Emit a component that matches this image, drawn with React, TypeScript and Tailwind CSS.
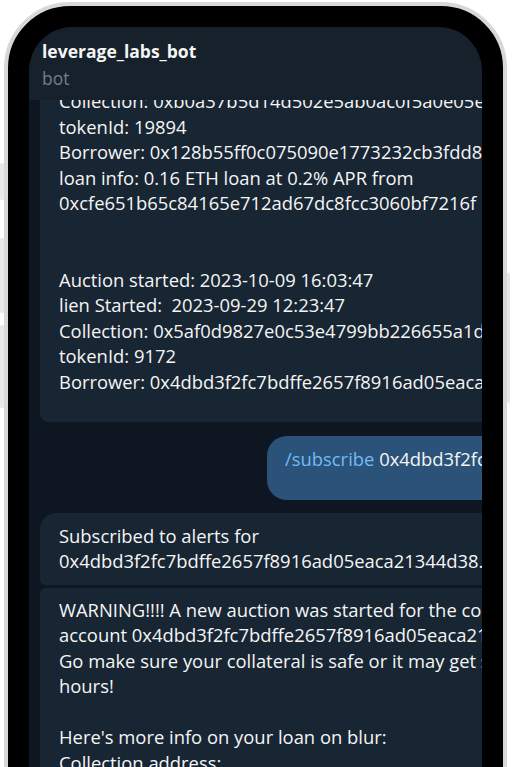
const font = { fontFamily: '"Open Sans", "Noto Sans", sans-serif' };

const firstBubble = [
  "Collection: 0xb0a37b5d14d502e5ab0ac0f5a0e05e8c",
  "tokenId: 19894",
  "Borrower: 0x128b55ff0c075090e1773232cb3fdd8e",
  "loan info: 0.16 ETH loan at 0.2% APR from",
  "0xcfe651b65c84165e712ad67dc8fcc3060bf7216f",
  "",
  "",
  "Auction started: 2023-10-09 16:03:47",
  "lien Started:  2023-09-29 12:23:47",
  "Collection: 0x5af0d9827e0c53e4799bb226655a1d8b",
  "tokenId: 9172",
  "Borrower: 0x4dbd3f2fc7bdffe2657f8916ad05eaca21344d38",
];

const warning = [
  "WARNING!!!! A new auction was started for the collateral of",
  "account 0x4dbd3f2fc7bdffe2657f8916ad05eaca21344d38.",
  "Go make sure your collateral is safe or it may get seized in 24",
  "hours!",
  "",
  "Here's more info on your loan on blur:",
  "Collection address:",
];

const Lines = ({ lines }: { lines: string[] }) => (
  <>
    {lines.map((l, i) => (
      <div key={i} className="h-[25.5px] leading-[25.5px] whitespace-pre">
        {l}
      </div>
    ))}
  </>
);

const App = () => {
  return (
    <div className="relative w-[512px] h-[767px] bg-white overflow-hidden" style={font}>
      {/* side buttons */}
      <div className="absolute left-0 top-[163px] w-[4px] h-[37px] rounded-l-[2px] bg-[#e8e8e8]" />
      <div className="absolute left-0 top-[238px] w-[4px] h-[75px] rounded-l-[2px] bg-[#e8e8e8]" />
      <div className="absolute left-0 top-[325px] w-[4px] h-[83px] rounded-l-[2px] bg-[#e8e8e8]" />
      <div className="absolute right-[2px] top-[273px] w-[3px] h-[130px] rounded-r-[2px] bg-[#e8e8e8]" />

      {/* phone */}
      <div className="ml-[4px] mt-[2px] w-[503px] h-[900px] rounded-[66px] border-[4px] border-[#d8d8d8] bg-black p-[21px]">
        <div className="h-full rounded-[44px] overflow-hidden bg-[#0e1621] flex flex-col">
          {/* header */}
          <div className="relative z-10 h-[73px] shrink-0 bg-[#17212b] pl-[13px] pt-[12px]">
            <div className="text-[17.5px] font-bold leading-[24px] text-[#f5f5f5]">leverage_labs_bot</div>
            <div className="mt-[3px] text-[17.5px] leading-[24px] text-[#6d7f8f]">bot</div>
          </div>

          {/* chat */}
          <div className="flex-1 overflow-hidden text-[18.4px] text-[#f5f5f5]">
            <div className="mt-[-22px] ml-[11px] w-[600px] rounded-tr-[16px] rounded-l-[8px] bg-[#182533] pl-[19px] pt-[10px] pb-[28px]">
              <Lines lines={firstBubble} />
            </div>

            <div className="mt-[14px] ml-[238px] w-[500px] rounded-l-[20px] bg-[#2b5278] pl-[18px] pt-[10px] pb-[28px]">
              <div className="h-[25.5px] leading-[25.5px] whitespace-pre">
                <span className="text-[#71baf7]">/subscribe</span> 0x4dbd3f2fc7bdffe2657f8916ad05eaca21344d38
              </div>
            </div>

            <div className="mt-[13px] ml-[11px] w-[600px] rounded-tl-[16px] rounded-bl-[6px] bg-[#182533] pl-[19px] pt-[10px] pb-[11px]">
              <Lines lines={["Subscribed to alerts for", "0x4dbd3f2fc7bdffe2657f8916ad05eaca21344d38."]} />
            </div>

            <div className="mt-[3px] ml-[11px] w-[600px] rounded-tl-[6px] bg-[#182533] pl-[19px] pt-[9px] pb-[20px]">
              <Lines lines={warning} />
            </div>
          </div>
        </div>
      </div>
    </div>
  );
};

export default App;
